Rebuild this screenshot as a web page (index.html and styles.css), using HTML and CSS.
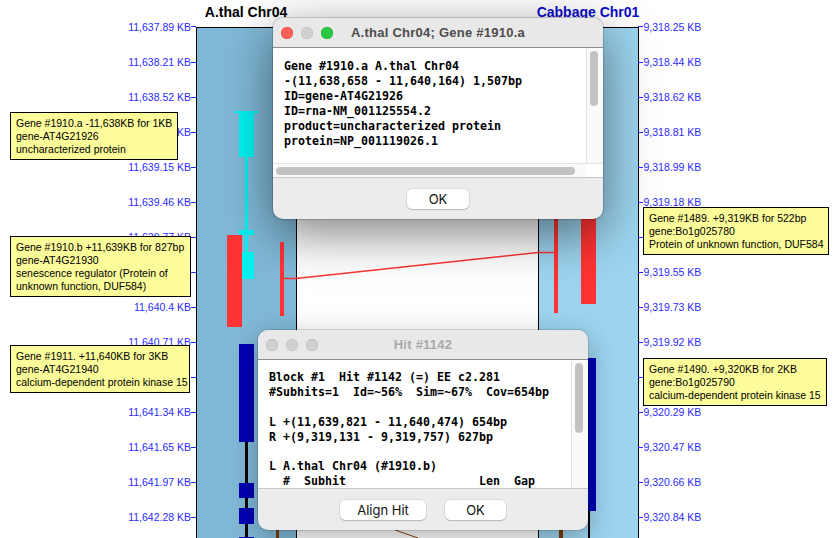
FILE: index.html
```html
<!DOCTYPE html>
<html>
<head>
<meta charset="utf-8">
<title>SyMAP</title>
<link rel="stylesheet" href="styles.css">
</head>
<body>
<div class="canvas">
  <svg class="tracks" width="838" height="538" viewBox="0 0 838 538" shape-rendering="crispEdges">
    <rect x="196" y="27" width="100" height="511" fill="#80b9d7"/>
    <rect x="296" y="27" width="242" height="511" fill="#ffffff"/>
    <rect x="538" y="27" width="100" height="511" fill="#9dd4ef"/>
    <rect x="196" y="27" width="443" height="1" fill="#000"/>
    <rect x="196" y="27" width="1" height="511" fill="#000"/>
    <rect x="296" y="27" width="1" height="511" fill="#000"/>
    <rect x="538" y="27" width="1" height="511" fill="#000"/>
    <rect x="638" y="27" width="1" height="511" fill="#000"/>
    <!-- gene 1910.a (cyan) -->
    <rect x="234" y="111" width="25" height="2" fill="#00f2f2"/>
    <rect x="239" y="112" width="15" height="45" fill="#00f2f2"/>
    <rect x="245" y="157" width="3" height="95" fill="#00f2f2"/>
    <rect x="239" y="230" width="15" height="5" fill="#00f2f2"/>
    <rect x="242" y="252" width="12" height="27" fill="#00f2f2"/>
    <!-- gene 1910.b (red) -->
    <rect x="227" y="235" width="15" height="92" fill="#ff3333"/>
    <!-- gene 1911 (blue) -->
    <rect x="245" y="442" width="3" height="96" fill="#000"/>
    <rect x="239" y="344" width="15" height="98" fill="#0000b4"/>
    <rect x="239" y="483" width="15" height="15" fill="#0000b4"/>
    <rect x="239" y="508" width="15" height="16" fill="#0000b4"/>
    <rect x="239" y="537" width="15" height="8" fill="#0000b4"/>
    <!-- hit -->
    <rect x="280" y="242" width="4" height="74" fill="#ff3333"/>
    <polyline points="284,278.5 296,278.5 538,252.5 554,252.5" fill="none" stroke="#ff3333" stroke-width="1.3" shape-rendering="auto"/>
    <rect x="554" y="180" width="4" height="133" fill="#ff3333"/>
    <!-- right genes -->
    <rect x="581" y="180" width="15" height="124" fill="#ff3333"/>
    <rect x="588" y="511" width="2" height="27" fill="#000"/>
    <rect x="581" y="358" width="15" height="153" fill="#0000b4"/>
    <!-- brown hits -->
    <rect x="276" y="530" width="3" height="8" fill="#7b3a0a"/>
    <rect x="559" y="530" width="4" height="8" fill="#7b3a0a"/>
    <line x1="395" y1="530" x2="418" y2="538" stroke="#7b3a0a" stroke-width="1" shape-rendering="auto"/>
  </svg>

  <div class="heading heading-left">A.thal Chr04</div>
  <div class="heading heading-right">Cabbage Chr01</div>

  <div class="axis axis-left">
    <div class="tick"><span>11,637.89 KB</span><i class="mark"></i></div>
    <div class="tick"><span>11,638.21 KB</span><i class="mark"></i></div>
    <div class="tick"><span>11,638.52 KB</span><i class="mark"></i></div>
    <div class="tick"><span>11,638.83 KB</span><i class="mark"></i></div>
    <div class="tick"><span>11,639.15 KB</span><i class="mark"></i></div>
    <div class="tick"><span>11,639.46 KB</span><i class="mark"></i></div>
    <div class="tick"><span>11,639.77 KB</span><i class="mark"></i></div>
    <div class="tick"><i class="mark"></i></div>
    <div class="tick"><span>11,640.4 KB</span><i class="mark"></i></div>
    <div class="tick"><span>11,640.71 KB</span><i class="mark"></i></div>
    <div class="tick"><i class="mark"></i></div>
    <div class="tick"><span>11,641.34 KB</span><i class="mark"></i></div>
    <div class="tick"><span>11,641.65 KB</span><i class="mark"></i></div>
    <div class="tick"><span>11,641.97 KB</span><i class="mark"></i></div>
    <div class="tick"><span>11,642.28 KB</span><i class="mark"></i></div>
  </div>

  <div class="axis axis-right">
    <div class="tick"><i class="mark"></i><span>9,318.25 KB</span></div>
    <div class="tick"><i class="mark"></i><span>9,318.44 KB</span></div>
    <div class="tick"><i class="mark"></i><span>9,318.62 KB</span></div>
    <div class="tick"><i class="mark"></i><span>9,318.81 KB</span></div>
    <div class="tick"><i class="mark"></i><span>9,318.99 KB</span></div>
    <div class="tick"><i class="mark"></i><span>9,319.18 KB</span></div>
    <div class="tick"><i class="mark"></i></div>
    <div class="tick"><i class="mark"></i><span>9,319.55 KB</span></div>
    <div class="tick"><i class="mark"></i><span>9,319.73 KB</span></div>
    <div class="tick"><i class="mark"></i><span>9,319.92 KB</span></div>
    <div class="tick"><i class="mark"></i></div>
    <div class="tick"><i class="mark"></i><span>9,320.29 KB</span></div>
    <div class="tick"><i class="mark"></i><span>9,320.47 KB</span></div>
    <div class="tick"><i class="mark"></i><span>9,320.66 KB</span></div>
    <div class="tick"><i class="mark"></i><span>9,320.84 KB</span></div>
  </div>

  <div class="tip tip-a">Gene #1910.a -11,638KB for 1KB<br>gene-AT4G21926<br>uncharacterized protein</div>
  <div class="tip tip-b">Gene #1910.b +11,639KB for 827bp<br>gene-AT4G21930<br>senescence regulator (Protein of<br>unknown function, DUF584)</div>
  <div class="tip tip-c">Gene #1911. +11,640KB for 3KB<br>gene-AT4G21940<br>calcium-dependent protein kinase 15</div>
  <div class="tip tip-d">Gene #1489. +9,319KB for 522bp<br>gene:Bo1g025780<br>Protein of unknown function, DUF584</div>
  <div class="tip tip-e">Gene #1490. +9,320KB for 2KB<br>gene:Bo1g025790<br>calcium-dependent protein kinase 15</div>

  <div class="win win-gene">
    <div class="titlebar">
      <div class="lights"><span class="light red"></span><span class="light grey"></span><span class="light green"></span></div>
      <div class="title">A.thal Chr04; Gene #1910.a</div>
    </div>
    <div class="body">
      <div class="viewport">
        <pre class="text">Gene #1910.a A.thal Chr04
-(11,638,658 - 11,640,164) 1,507bp
ID=gene-AT4G21926
ID=rna-NM_001125554.2
product=uncharacterized protein
protein=NP_001119026.1</pre>
        <div class="vscroll"><div class="vthumb thumb-gene"></div></div>
      </div>
      <div class="hscroll"><div class="htrack"><div class="hthumb"></div></div><div class="corner"></div></div>
    </div>
    <div class="footer"><button class="btn btn-ok">OK</button></div>
  </div>

  <div class="win win-hit">
    <div class="titlebar">
      <div class="lights"><span class="light grey"></span><span class="light grey"></span><span class="light grey"></span></div>
      <div class="title">Hit #1142</div>
    </div>
    <div class="body">
      <div class="viewport">
        <pre class="text text-hit">Block #1  Hit #1142 (=) EE c2.281
#Subhits=1  Id=~56%  Sim=~67%  Cov=654bp

L +(11,639,821 - 11,640,474) 654bp
R +(9,319,131 - 9,319,757) 627bp

L A.thal Chr04 (#1910.b)
  #  Subhit                   Len  Gap</pre>
        <div class="vscroll"><div class="vthumb thumb-hit"></div></div>
      </div>
    </div>
    <div class="footer"><button class="btn btn-align">Align Hit</button><button class="btn btn-ok2">OK</button></div>
  </div>
</div>
</body>
</html>
```

FILE: styles.css
```css
* { box-sizing: border-box; }
html, body { margin: 0; padding: 0; }
body {
  width: 838px;
  height: 538px;
  overflow: hidden;
  background: #ffffff;
  font-family: "Liberation Sans", Arial, sans-serif;
}
.canvas {
  position: relative;
  width: 838px;
  height: 538px;
  overflow: hidden;
}
.tracks { position: absolute; left: 0; top: 0; }

.heading {
  position: absolute;
  top: 4px;
  width: 140px;
  text-align: center;
  font-size: 14px;
  font-weight: bold;
  line-height: 16px;
  white-space: nowrap;
}
.heading-left { left: 176px; color: #000; }
.heading-right { left: 518px; color: #0b0bcc; }

.axis {
  position: absolute;
  top: 9.48px;
  display: flex;
  flex-direction: column;
  font-size: 10.5px;
  color: #2b2bff;
}
.axis-left { left: 0; width: 196px; }
.axis-right { left: 638px; width: 120px; }
.tick {
  height: 35.04px;
  flex: none;
  display: flex;
  align-items: center;
  white-space: nowrap;
}
.axis-left .tick { justify-content: flex-end; }
.mark {
  display: block;
  width: 5px;
  height: 1px;
  background: #2b2bff;
  flex: none;
}
.axis-right .mark { margin-right: 0.5px; }

.tip {
  position: absolute;
  background: #fcfc9b;
  border: 1px solid #000;
  font-size: 10.5px;
  line-height: 13px;
  color: #000;
  padding: 4px 4px 3px 5px;
  white-space: nowrap;
}
.tip-a { left: 10px; top: 112px; width: 168px; }
.tip-b { left: 10px; top: 236px; width: 181px; }
.tip-c { left: 10px; top: 345px; width: 180px; }
.tip-d { left: 643px; top: 207px; width: 186px; }
.tip-e { left: 643px; top: 358px; width: 184px; }

.win {
  position: absolute;
  width: 330px;
  display: flex;
  flex-direction: column;
  background: #ececec;
  border-radius: 10px;
  overflow: hidden;
}
.win-gene {
  left: 273px;
  top: 18px;
  height: 201px;
  box-shadow: 0 0 0 1px rgba(0, 0, 0, 0.16), 0 14px 50px rgba(0, 0, 0, 0.5);
}
.win-hit {
  left: 258px;
  top: 330px;
  height: 200px;
  box-shadow: 0 0 0 1px rgba(0, 0, 0, 0.12), 0 8px 30px rgba(0, 0, 0, 0.3);
}
.titlebar {
  height: 30px;
  flex: none;
  display: grid;
  grid-template-columns: 1fr auto 1fr;
  align-items: center;
  padding: 0 8px;
  background: #e8e8e8;
  border-bottom: 1px solid #8e8e8e;
}
.lights { display: flex; gap: 8px; }
.light {
  width: 12px;
  height: 12px;
  border-radius: 50%;
  display: block;
}
.light.red { background: #fe5f57; box-shadow: inset 0 0 0 0.5px #e0443e; }
.light.grey { background: #d0d0d0; box-shadow: inset 0 0 0 0.5px #bababa; }
.light.green { background: #28c840; box-shadow: inset 0 0 0 0.5px #1aab29; }
.title {
  font-size: 13px;
  font-weight: bold;
  letter-spacing: 0.25px;
  color: #4d4d4d;
  white-space: nowrap;
}
.win-hit .title { color: #a9a9a9; }

.body {
  flex: none;
  display: flex;
  flex-direction: column;
  background: #ffffff;
  border-bottom: 1px solid #c6c6c6;
}
.win-gene .body { height: 130px; }
.win-hit .body { height: 129px; }
.viewport {
  flex: 1;
  min-height: 0;
  display: flex;
  overflow: hidden;
}
.text {
  flex: 1;
  margin: 0;
  padding: 11px 0 0 11px;
  font-family: "DejaVu Sans Mono", "Liberation Mono", monospace;
  font-weight: bold;
  font-size: 11.63px;
  line-height: 15px;
  color: #000;
  white-space: pre;
}
.text-hit { padding-top: 10px; line-height: 14.9px; }
.vscroll {
  width: 17px;
  flex: none;
  background: #fafafa;
  border-left: 1px solid #e2e2e2;
  padding: 3px 5px 0 3px;
}
.vthumb { border-radius: 4px; background: #c2c2c2; }
.thumb-gene { height: 55px; }
.thumb-hit { height: 70px; }
.hscroll {
  height: 14px;
  flex: none;
  display: flex;
  background: #fafafa;
  border-top: 1px solid #e2e2e2;
}
.htrack { flex: 1; padding: 3px 11px 0 3px; }
.hthumb { height: 8px; border-radius: 4px; background: #c2c2c2; }
.corner { width: 17px; background: #ffffff; }

.footer {
  flex: 1;
  display: flex;
  justify-content: center;
  align-items: center;
  gap: 19px;
}
.btn {
  height: 20px;
  padding: 0;
  border: none;
  border-radius: 5px;
  background: #ffffff;
  box-shadow: 0 0 0 0.5px rgba(0, 0, 0, 0.14), 0 1px 1px rgba(0, 0, 0, 0.16);
  font-family: Inter, "Liberation Sans", sans-serif;
  font-size: 13px;
  color: #111;
  line-height: 20px;
}
.btn-ok { width: 62px; }
.btn-ok2 { width: 61px; }
.btn-align { width: 86px; }
```
